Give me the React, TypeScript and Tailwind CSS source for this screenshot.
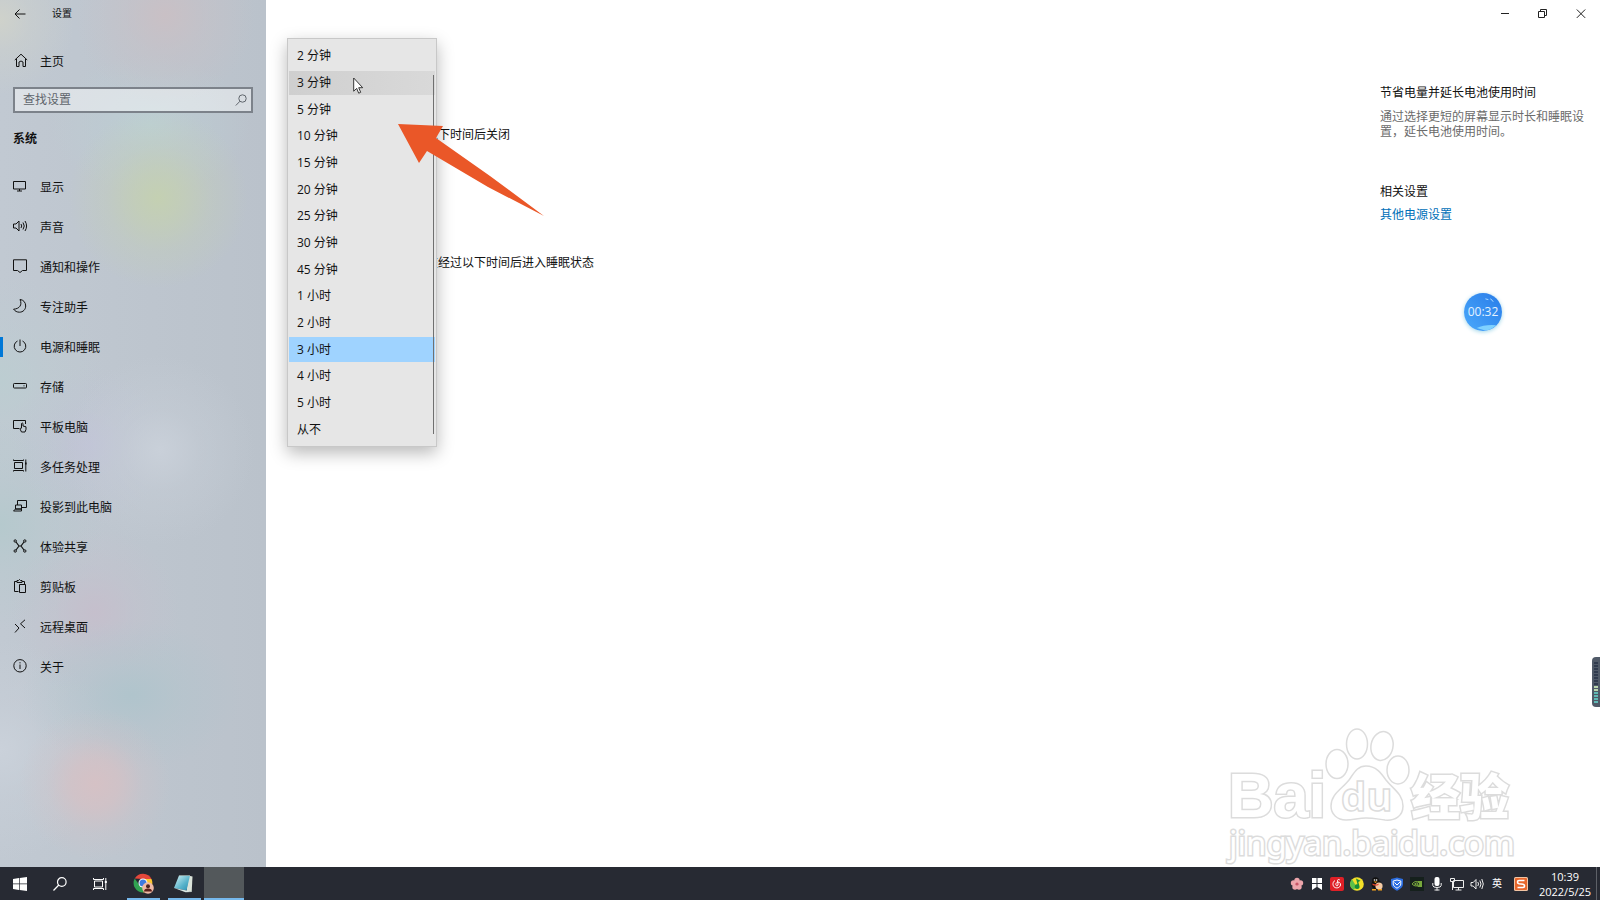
import { useState } from 'react';
import type { ReactNode } from 'react';

function Icon({ children }: { children: ReactNode }) {
  return (
    <svg
      viewBox="0 0 14 14"
      className="mb-0.5 size-3.5 shrink-0 overflow-visible"
      fill="none"
      stroke="currentColor"
      strokeWidth="1"
      aria-hidden="true"
    >
      {children}
    </svg>
  );
}

const navItems: { label: string; icon: ReactNode }[] = [
  { label: '显示', icon: <path d="M.5 2.500h12v7.500h-12zM6.500 10v2M4 12h5" /> },
  {
    label: '声音',
    icon: (
      <path d="M.5 5v4H3l3 3V2L3 5zM8 5q1.500 2 0 4M10 3.500q2.500 3.500 0 7M12 2q3.200 5 0 10" />
    ),
  },
  { label: '通知和操作', icon: <path d="M.5 .8h13V11.500H9.500l-2.500 2-2.500-2H.5z" /> },
  {
    label: '专注助手',
    icon: <path d="M7 .5C10.500.8 12.700 3.500 12.700 7S10 13.200 6.500 13.200C4 13.200 2 12.200.6 10.200 6.500 9.800 9.500 6 7 .5z" />,
  },
  { label: '电源和睡眠', icon: <path d="M7 .5V7M4.500 2a5.800 5.800 0 1 0 5 0" /> },
  {
    label: '存储',
    icon: (
      <>
        <rect x=".5" y="4.500" width="13" height="4.500" rx=".8" />
        <path d="M10.500 6.800h1" />
      </>
    ),
  },
  {
    label: '平板电脑',
    icon: (
      <path d="M6 9.500H.5v-8h12V5M8.500 9V4.500q.8-1 1.500 0V7l3 .8v2.500L12 13H8.500L6.800 9.500q1-.8 1.700.5" />
    ),
  },
  {
    label: '多任务处理',
    icon: (
      <>
        <path d="M1.500 3.500h8v6h-8zM.5 .5v1h10v-1M.5 12.500v-1h10v1M12.800 .5v12" />
        <path d="M12 4.500h1.600" strokeWidth="2" />
      </>
    ),
  },
  { label: '投影到此电脑', icon: <path d="M4.500 6V1.500h9V8.500H9M2.500 6h6v4h-6zM.5 12l2-2h6v2z" /> },
  {
    label: '体验共享',
    icon: (
      <>
        <path d="M3 3l3 4-3 4M11 3L8 7l3 4M6 7h2" strokeWidth="1.200" />
        <circle cx="2.200" cy="2" r="1.200" />
        <circle cx="11.800" cy="2" r="1.200" />
        <circle cx="2.200" cy="12" r="1.200" />
        <circle cx="11.800" cy="12" r="1.200" />
      </>
    ),
  },
  {
    label: '剪贴板',
    icon: <path d="M5.500 12.500h-4v-10H4V1.500h1.500L6.500.5l1 1H9v1h2.500V5M4 2.500v1h5v-1M6.500 5.500h6v8h-6z" />,
  },
  { label: '远程桌面', icon: <path d="M2 5l4 4-4 4.500M12 .8L7.500 4.800 12 9" /> },
  {
    label: '关于',
    icon: (
      <>
        <circle cx="7" cy="6.800" r="6.200" />
        <path d="M7 5.500v4.500M7 3.200v1.200" />
      </>
    ),
  },
];

const durations = [
  '2 分钟',
  '3 分钟',
  '5 分钟',
  '10 分钟',
  '15 分钟',
  '20 分钟',
  '25 分钟',
  '30 分钟',
  '45 分钟',
  '1 小时',
  '2 小时',
  '3 小时',
  '4 小时',
  '5 小时',
  '从不',
];

function Sidebar() {
  return (
    <aside className="w-[266px] shrink-0 bg-[radial-gradient(circle_at_158px_198px,#c4d0b2_0px,#c4d0b2b0_26px,#c4d0b250_52px,transparent_90px),radial-gradient(circle_at_95px_784px,#d5c1c5_0px,#d5c1c5c0_24px,#d5c1c540_48px,transparent_76px),radial-gradient(circle_at_165px_15px,#c9c0c5_0px,#c9c0c570_40px,transparent_90px),radial-gradient(circle_at_0px_20px,#cfd2cb_0px,#cfd2cb70_30px,transparent_75px),radial-gradient(ellipse_110px_75px_at_132px_695px,#b0c4cc_0px,#b0c4cc70_45%,transparent_100%),radial-gradient(ellipse_100px_70px_at_150px_125px,#bccfd4_0px,#bccfd470_45%,transparent_100%),radial-gradient(circle_at_95px_612px,#c5bfcc_0px,#c5bfcc60_40px,transparent_85px),radial-gradient(circle_at_160px_450px,#c9d0d9_0px,#c9d0d960_40px,transparent_95px),radial-gradient(circle_at_90px_445px,#c0c3d6_0px,#c0c3d650_35px,transparent_80px),radial-gradient(circle_at_0px_525px,#b5c9cd_0px,#b5c9cd70_45px,transparent_105px),radial-gradient(circle_at_0px_380px,#bccdd1_0px,#bccdd160_45px,transparent_105px),radial-gradient(circle_at_0px_750px,#cad1da_0px,#cad1da70_45px,transparent_110px),linear-gradient(90deg,#c1c9d2,#bac2cb)]">
      <header className="flex h-[27px] items-center">
        <button type="button" aria-label="返回" className="flex h-full w-10 items-center justify-center">
          <svg viewBox="0 0 12 12" className="size-3" fill="none" stroke="currentColor" aria-hidden="true">
            <path d="M11.500 6H1M5.500 1.500L1 6l4.500 4.500" />
          </svg>
        </button>
        <h1 className="pl-3 text-[10px]">设置</h1>
      </header>
      <a href="#home" className="mt-3.5 flex h-10 items-center gap-3 px-3.5">
        <Icon>
          <path d="M.8 7L7 1.200l6.200 5.800M2.500 6v7.500H5V9q2-2 4 0v4.500h2.500V6" />
        </Icon>
        <span className="pt-0.5">主页</span>
      </a>
      <label className="mx-[13px] mt-1.5 flex h-[26px] items-center border-2 border-[#7c828a] bg-white/45 pr-1 pl-2">
        <input
          type="text"
          aria-label="查找设置"
          placeholder="查找设置"
          className="w-full min-w-0 bg-transparent outline-none placeholder:text-[#5f656c]"
        />
        <svg viewBox="0 0 12 12" className="size-3 shrink-0" fill="none" stroke="#60666d" aria-hidden="true">
          <circle cx="7.500" cy="4.500" r="3.700" />
          <path d="M5 7.200L.8 11.500" />
        </svg>
      </label>
      <h2 className="mt-4 px-[13px] text-xs leading-5 font-bold">系统</h2>
      <nav className="mt-[18px]">
        {navItems.map(({ label, icon }) => (
          <a
            key={label}
            href={`#${label}`}
            aria-current={label === '电源和睡眠' ? 'page' : undefined}
            className="group relative flex h-10 items-center gap-[13px] px-[13px]"
          >
            <span className="absolute top-2.5 left-0 hidden h-5 w-[3px] bg-[#0078d7] group-aria-[current=page]:block" />
            <Icon>{icon}</Icon>
            <span className="pt-0.5">{label}</span>
          </a>
        ))}
      </nav>
    </aside>
  );
}

function DurationMenu() {
  const [selected, setSelected] = useState('3 小时');
  return (
    <div
      role="listbox"
      aria-label="时间"
      className="absolute top-[38px] left-[21px] grid h-[409px] w-[150px] auto-rows-fr border border-[#c8c8c8] bg-[#e6e6e6] pt-1 pb-[3px] shadow-[0_6px_16px_rgba(0,0,0,0.28)]"
    >
      {durations.map((d) => (
        <button
          key={d}
          type="button"
          role="option"
          aria-selected={d === selected}
          onClick={() => setSelected(d)}
          className={
            d === selected
              ? 'mx-px my-px bg-[#9fd3ff] pl-2 text-left leading-6'
              : d === '3 分钟'
                ? 'mx-px my-px bg-linear-to-r from-[#cfcfcf] to-[#d9d9d9] pl-2 text-left leading-6'
                : 'mx-px my-px pl-2 text-left leading-6'
          }
        >
          {d}
        </button>
      ))}
      <span className="absolute top-9 right-0.5 bottom-3 w-px bg-[#707070]" />
      <svg viewBox="0 0 12 18" className="absolute top-[38px] left-[65px] h-[18px] w-3" aria-hidden="true">
        <path
          d="M.7 1v13.200l3-2.800 2 4.800 2-.9-2-4.600h4z"
          fill="#fff"
          stroke="#222"
          strokeWidth=".9"
        />
      </svg>
    </div>
  );
}

function Watermark() {
  return (
    <svg
      viewBox="0 0 300 142"
      className="absolute right-[80px] bottom-0 h-[142px] w-[300px]"
      fill="#fff"
      stroke="#dcdcdc"
      strokeWidth="1.500"
      role="img"
      aria-label="Baidu 经验"
    >
      <text
        x="8"
        y="92"
        fontSize="63"
        fontWeight="700"
        fontFamily="'Liberation Sans', sans-serif"
        paintOrder="stroke"
        strokeWidth="3"
      >
        Bai
      </text>
      <ellipse cx="117" cy="39" rx="11" ry="14.500" />
      <ellipse cx="137" cy="19" rx="10.500" ry="15" />
      <ellipse cx="162" cy="21" rx="11" ry="14.500" transform="rotate(12 162 21)" />
      <ellipse cx="178" cy="45" rx="11" ry="14" />
      <path d="M146 41c10 0 15 7 20 14 7 9 17 14 17 26 0 10-8 15-18 14-8-1-11-2-19-2s-12 2-20 2c-9 0-15-6-15-14 0-12 11-17 18-26 5-7 8-14 17-14z" />
      <text
        x="121"
        y="86"
        fontSize="40"
        fontWeight="700"
        fontFamily="'Open Sans', sans-serif"
        strokeWidth="1.500"
      >
        du
      </text>
      <text
        x="191"
        y="90"
        fontSize="49"
        fontWeight="900"
        fontFamily="'Noto Sans CJK SC', sans-serif"
        paintOrder="stroke"
        strokeWidth="3"
      >
        经验
      </text>
      <text
        x="9"
        y="130"
        fontSize="33"
        fontFamily="'Noto Sans', sans-serif"
        paintOrder="stroke"
        strokeWidth="3"
      >
        jingyan.baidu.com
      </text>
    </svg>
  );
}

function Content() {
  return (
    <main className="relative flex min-w-0 flex-1 flex-col bg-white">
      <div className="flex h-[27px] justify-end">
        <button type="button" aria-label="最小化" className="flex w-[38px] items-center justify-center">
          <svg viewBox="0 0 10 10" className="size-2.5" stroke="#222" aria-hidden="true">
            <path d="M1 4.500h8" />
          </svg>
        </button>
        <button type="button" aria-label="还原" className="flex w-[38px] items-center justify-center">
          <svg viewBox="0 0 10 10" className="size-2.5" fill="none" stroke="#222" aria-hidden="true">
            <path d="M.5 2.500h6V8.500h-6zM2.500 2.500v-2h6v6H6.500" />
          </svg>
        </button>
        <button type="button" aria-label="关闭" className="flex w-[38px] items-center justify-center">
          <svg viewBox="0 0 10 10" className="size-2.5" stroke="#222" aria-hidden="true">
            <path d="M.8 .5l8.400 8.400M9.200 .5L.8 8.900" />
          </svg>
        </button>
      </div>
      <div className="flex justify-between pr-3 pl-40">
        <section className="flex flex-col gap-[108px] pt-[98px] leading-5">
          <p>以下时间后关闭</p>
          <p>在经过以下时间后进入睡眠状态</p>
        </section>
        <aside className="w-52 pt-14">
          <h3 className="leading-5">节省电量并延长电池使用时间</h3>
          <p className="mt-1.5 leading-[15px] text-[#6b6b6b]">
            通过选择更短的屏幕显示时长和睡眠设置，延长电池使用时间。
          </p>
          <h3 className="mt-[43px] leading-5">相关设置</h3>
          <a href="#power" className="mt-[3px] block leading-5 text-[#0070b8]">
            其他电源设置
          </a>
        </aside>
      </div>

      <DurationMenu />

      <svg viewBox="0 0 148 94" className="absolute top-[124px] left-[132px] h-[94px] w-[148px]" aria-hidden="true">
        <path d="M0 0l45 2-7 12L92 52l54 40L90 63 29 27l-8 12z" fill="#ea5728" />
      </svg>

      <div className="absolute top-[293px] right-[98px] flex size-[38px] items-center justify-center rounded-full bg-linear-to-tr from-[#4ba9fb] to-[#287be8] font-['Open_Sans',sans-serif] text-xs text-[#e3f2ff] shadow-[0_1px_4px_#9ed5e8]">
        <svg viewBox="0 0 39 39" className="absolute inset-0" fill="none" aria-hidden="true">
          <path d="M22 6l3 .8M27 6q2 1 3 3" stroke="#a8d9ff" />
          <path d="M13 36q8-4 20-3-6 6-13 5z" fill="#7fd2ff" />
        </svg>
        <span className="relative">00:32</span>
      </div>

      <div className="absolute right-0 bottom-[160px] flex h-[50px] w-2 flex-col items-center justify-center gap-px rounded-l bg-[#505a68]">
        {Array.from({ length: 14 }, (_, i) => (
          <span key={i} className={i < 8 ? 'h-0.5 w-1 bg-[#303b4e]' : i < 10 ? 'h-0.5 w-1 bg-[#b9d6ae]' : 'h-0.5 w-1 bg-[#5fb9b5]'} />
        ))}
      </div>

      <Watermark />
    </main>
  );
}

const trayIcons: { label: string; art: ReactNode }[] = [
  {
    label: '樱花',
    art: (
      <g fill="#eda5ab">
        <circle cx="7" cy="3.500" r="2.700" />
        <circle cx="3.500" cy="6" r="2.700" />
        <circle cx="10.500" cy="6" r="2.700" />
        <circle cx="5" cy="10" r="2.700" />
        <circle cx="9" cy="10" r="2.700" />
        <circle cx="7" cy="7" r="1.600" fill="#c85566" />
      </g>
    ),
  },
  {
    label: '工具',
    art: <path d="M2 1h4.500v5H2zM7.500 1H12v5H7.500zM2 7h4.500v3L2 13zM7.500 7H12v6l-4.500-3z" fill="#fff" />,
  },
  {
    label: '音乐',
    art: (
      <>
        <rect width="14" height="14" rx="2" fill="#df2027" />
        <path
          d="M5 3.500C2.500 5 2.500 8 4 9.800c2 2 6 1.200 6.500-1.800C10.800 5.500 8.500 4.500 6.800 5.500 5 7 6 9 7.200 8.800 9 8.500 7.500 5.500 7.500 3.500 7.500 2.500 8.800 2.200 9.800 3"
          fill="none"
          stroke="#fff"
        />
      </>
    ),
  },
  {
    label: 'QQ音乐',
    art: (
      <>
        <circle cx="7" cy="7" r="6.800" fill="#f3df29" />
        <path d="M2 2.200a6.800 6.800 0 0 0 2 10.900l2-4z" fill="#5cc04a" />
        <path d="M6 1.500l4.500 2.200-2.200 1.200 1.200 4.400a2.400 2.400 0 1 1-2-2z" fill="#178c3a" />
      </>
    ),
  },
  {
    label: 'QQ',
    art: (
      <>
        <ellipse cx="6.500" cy="7.500" rx="5" ry="5" fill="#111" />
        <circle cx="5.500" cy="3.500" r="3.300" fill="#111" />
        <circle cx="9" cy="9" r="3.600" fill="#f4cba5" />
        <circle cx="4.500" cy="3" r=".8" fill="#fff" />
        <circle cx="6.600" cy="3" r=".8" fill="#fff" />
        <path d="M3.500 4.500h4L5.500 6zM2 12h4v1.500H2zM8 12h4v1.500H8z" fill="#f6a21d" />
        <path d="M2.500 6.500q4 2 6 0v1.500q-3 1.500-6 0z" fill="#e4422d" />
      </>
    ),
  },
  {
    label: '电脑管家',
    art: (
      <>
        <path d="M7 .5l6 1.500v5c0 3-3 5.500-6 6.800C4 12.500 1 10 1 7V2z" fill="#2c6ee2" />
        <path d="M7 3l3.800 1v3c0 1.800-2 3.200-3.800 4.200C5 10.200 3.200 8.800 3.200 7V4z" fill="none" stroke="#fff" />
        <path d="M4.500 5.500L7 8l3-3" fill="none" stroke="#fff" />
      </>
    ),
  },
  {
    label: 'NVIDIA',
    art: (
      <>
        <rect width="14" height="14" fill="#15201c" />
        <path d="M2 7q4-5 8 0-4 4-8 0zM4.500 7q2-2 3.500 0-1.500 2-3.500 0z" fill="none" stroke="#78a83c" />
        <path d="M7 4h5v6H7l3-3z" fill="#78a83c" />
      </>
    ),
  },
  {
    label: '麦克风',
    art: (
      <>
        <rect x="4.500" y="0" width="5" height="9" rx="2" fill="#fff" />
        <path d="M2.800 6v2.500q0 2 4.200 2t4.200-2V6M7 10.500v3M4.500 13h5" fill="none" stroke="#eee" />
      </>
    ),
  },
  {
    label: '网络',
    art: <path d="M3.500 3.500h10v7h-10zM8.500 10.500v2.500M5.500 13h6M.5 1.500h4v3h-4zM2.500 4.500v8.500" fill="none" stroke="#eee" />,
  },
  {
    label: '音量',
    art: (
      <path
        d="M1 5.500v3.500h2.200L6 12V2.500L3.200 5.500zM7.800 5q1.500 2 0 4M9.800 3.500q2.400 3.500 0 7M11.800 2q3 5 0 10"
        fill="none"
        stroke="#eee"
      />
    ),
  },
];

function Taskbar() {
  const app =
    "relative flex h-full w-10 items-center justify-center after:absolute after:bottom-0 after:h-0.5 after:w-[33px] after:bg-[#76b9ed]";
  return (
    <footer className="flex h-[33px] shrink-0 items-center bg-[#272a33] text-white">
      <button type="button" aria-label="开始" className="flex h-full w-10 items-center justify-center">
        <svg viewBox="0 0 14 14" className="size-3.5" fill="#fff" aria-hidden="true">
          <path d="M0 2l6-.9v5.500H0zM6.700 1L14 0v6.600H6.700zM0 7.300h6V13l-6-.9zM6.700 7.300H14V14l-7.300-1z" />
        </svg>
      </button>
      <button type="button" aria-label="搜索" className="flex h-full w-10 items-center justify-center">
        <svg viewBox="0 0 14 14" className="size-3.5" fill="none" stroke="#fff" strokeWidth="1.200" aria-hidden="true">
          <circle cx="8.800" cy="5" r="4.300" />
          <path d="M5.800 8L.5 13.500" />
        </svg>
      </button>
      <button type="button" aria-label="任务视图" className="flex h-full w-10 items-center justify-center">
        <svg viewBox="0 0 14 14" className="size-3.5" fill="none" stroke="#fff" aria-hidden="true">
          <path d="M1.500 4h8v6h-8zM.5 1v1.500h10V1M.5 13v-1.500h10V13M12.800 1v12" />
          <path d="M11.800 5h2" strokeWidth="2" />
        </svg>
      </button>
      <button type="button" aria-label="Chrome" className={`${app} ml-[3px]`}>
        <svg viewBox="0 0 21 21" className="size-[21px]" aria-hidden="true">
          <path d="M1.700 5.500A9.500 9.500 0 0 1 18.500 6H10z" fill="#e4473b" />
          <path d="M18.500 6a9.500 9.500 0 0 1-8.500 13.500l4-8.500-4-5z" fill="#fbc62f" />
          <path d="M1.700 5.500A9.500 9.500 0 0 0 10 19.500l4-7-8-1z" fill="#31a352" />
          <circle cx="10" cy="10" r="4.500" fill="#fff" />
          <circle cx="10" cy="10" r="3.500" fill="#3c7be0" />
          <circle cx="15" cy="15" r="5.800" fill="#efb9a5" />
          <circle cx="15" cy="13.300" r="2" fill="#4b251f" />
          <path d="M11 18.500q0-3 4-3t4 3z" fill="#5b211b" />
        </svg>
      </button>
      <button type="button" aria-label="记事本" className={`${app} ml-px`}>
        <svg viewBox="0 0 20 20" className="size-5" aria-hidden="true">
          <defs>
            <linearGradient id="pad" x1="0" y1="0" x2="1" y2="1">
              <stop offset="0" stopColor="#d7f3f5" />
              <stop offset=".6" stopColor="#57b3cb" />
              <stop offset="1" stopColor="#2b8db0" />
            </linearGradient>
          </defs>
          <path d="M14 1.500l4.500 1-.8 15.500-5-1z" fill="#dbe3da" />
          <path d="M5 1.500L16 1.500l-3.500 15L0 14z" fill="url(#pad)" />
          <path d="M0 14l12.500 2.500 5.200 1.500-6.200.2z" fill="#d9e7e5" />
          <path d="M5 1.500h11" stroke="#899" />
        </svg>
      </button>
      <button
        type="button"
        aria-label="设置"
        className="h-full w-10 border-b-2 border-[#76b9ed] bg-[#53585b]"
      />

      <div className="ml-auto flex h-full items-center">
        {trayIcons.map(({ label, art }) => (
          <button key={label} type="button" aria-label={label} className="flex h-full w-5 items-center justify-center">
            <svg viewBox="0 0 14 14" className="size-3.5" aria-hidden="true">
              {art}
            </svg>
          </button>
        ))}
        <button type="button" className="h-full w-5 text-[10px]">
          英
        </button>
        <button type="button" aria-label="搜狗输入法" className="flex h-full w-[27px] items-center justify-center">
          <svg viewBox="0 0 14 14" className="size-3.5" aria-hidden="true">
            <rect width="14" height="14" rx="1.500" fill="#f2c4a3" />
            <rect x="1" y="1" width="12" height="12" rx="1" fill="#e8672c" />
            <path d="M10.500 3.500H5q-1.500 0-1.500 1.500t1.500 1.800l4 .5q1.500.3 1.500 1.700t-1.500 1.500H3.500" fill="none" stroke="#fff" strokeWidth="1.600" />
          </svg>
        </button>
        <time className="w-[62px] text-center font-['Open_Sans',sans-serif] text-[11px] leading-[15px]">
          <span className="block">10:39</span>
          <span className="block">2022/5/25</span>
        </time>
        <span className="mr-[3px] h-full w-px bg-[#5d6067]" />
      </div>
    </footer>
  );
}

export default function App() {
  return (
    <div className="flex min-h-screen flex-col bg-white font-['Open_Sans','Noto_Sans_CJK_SC',sans-serif] text-xs text-[#111]">
      <div className="flex flex-1">
        <Sidebar />
        <Content />
      </div>
      <Taskbar />
    </div>
  );
}
